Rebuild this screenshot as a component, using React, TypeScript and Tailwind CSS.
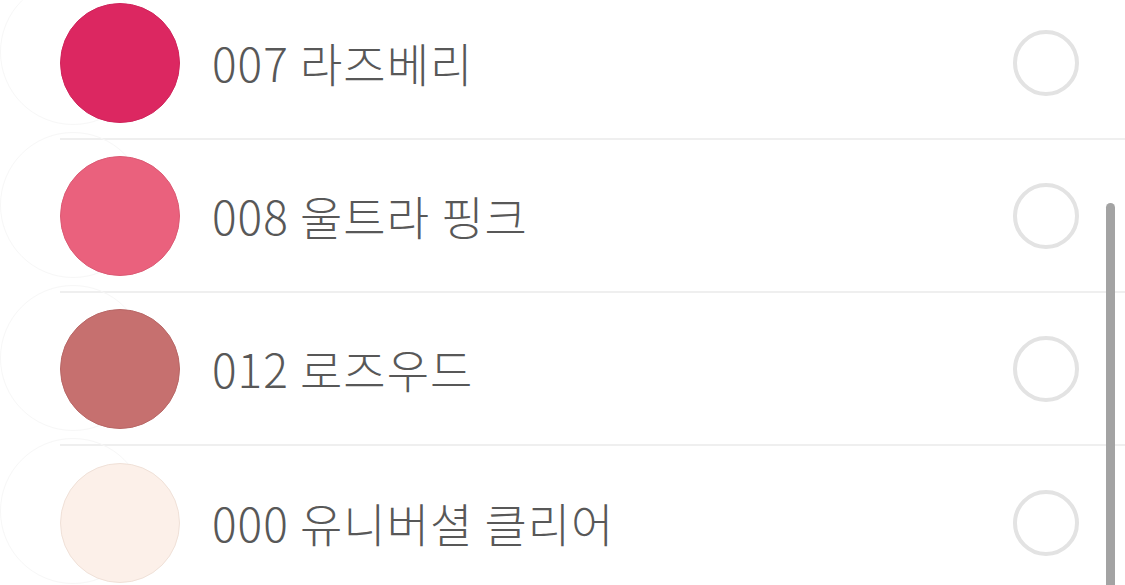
import React from "react";

type Shade = { code: string; name: string; fill: string; ring: string };

const shades: Shade[] = [
  { code: "007", name: "라즈베리", fill: "bg-[#dc2761]", ring: "border-[#d0245b]" },
  { code: "008", name: "울트라 핑크", fill: "bg-[#ea617d]", ring: "border-[#dc5a74]" },
  { code: "012", name: "로즈우드", fill: "bg-[#c6706f]", ring: "border-[#b86766]" },
  { code: "000", name: "유니버셜 클리어", fill: "bg-[#fcf0e9]", ring: "border-[#f0e1d8]" },
];

function Row({ shade, last }: { shade: Shade; last: boolean }) {
  return (
    <div className="relative h-[153px] shrink-0">
      {/* soft halo behind the swatch */}
      <div className="absolute left-[0px] top-[-8px] h-[146px] w-[146px] rounded-full border border-[#f7f7f7]" />
      <div
        className={`relative flex h-full items-center ml-[60px] ${
          last ? "" : "border-b-2 border-[#efefef]"
        }`}
      >
        <div className={`h-[120px] w-[120px] shrink-0 rounded-full border ${shade.fill} ${shade.ring}`} />
        <div className="ml-[32px] mb-[2px] flex-1 text-[46px] font-light leading-none text-[#585858] tracking-[1px]">
          {shade.code} {shade.name}
        </div>
        <div className="mr-[46px] h-[66px] w-[66px] shrink-0 rounded-full border-[4px] border-[#e3e3e3]" />
      </div>
    </div>
  );
}

export default function App() {
  return (
    <div
      className="relative h-[585px] w-[1125px] overflow-hidden bg-white"
      style={{ fontFamily: '"Noto Sans CJK KR", "Noto Sans", sans-serif' }}
    >
      <div className="flex flex-col mt-[-13px]">
        {shades.map((s, i) => (
          <Row key={s.code} shade={s} last={i === shades.length - 1} />
        ))}
      </div>
      {/* scroll indicator */}
      <div className="absolute left-[1106px] top-[203px] h-[400px] w-[9px] rounded-full bg-[#a3a3a3]" />
    </div>
  );
}
